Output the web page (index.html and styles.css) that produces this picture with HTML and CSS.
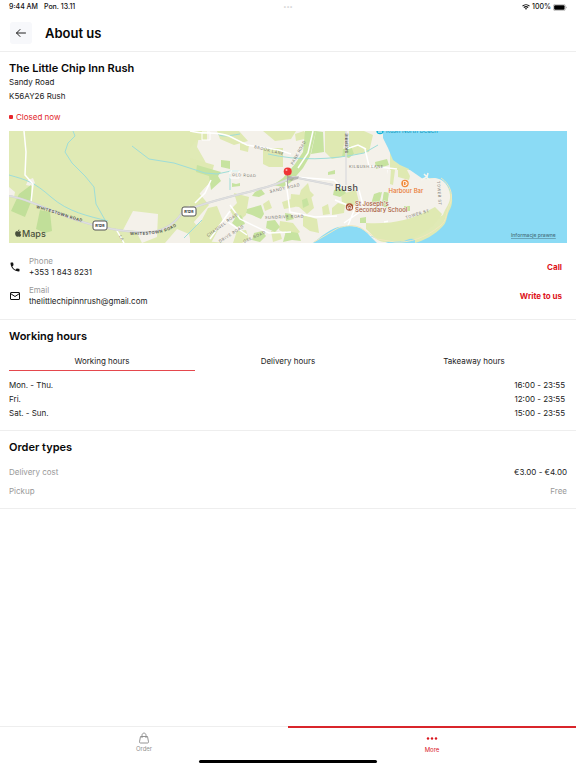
FILE: index.html
```html
<!DOCTYPE html>
<html lang="en">
<head>
<meta charset="utf-8">
<meta name="viewport" content="width=device-width, initial-scale=1">
<title>About us</title>
<link rel="stylesheet" href="styles.css">
</head>
<body>
<div class="status">
  <span>9:44 AM</span>
  <span>Pon. 13.11</span>
  <span class="status-dots">•••</span>
  <svg class="wifi" viewBox="0 0 16 12" fill="none" stroke="#111" stroke-width="2.2"><path d="M1 4.3C5 .4 11 .4 15 4.3M3.7 7.2c2.5-2.4 6.1-2.4 8.6 0"/><path d="M8 11.6 5.6 9.2c1.4-1.2 3.4-1.2 4.8 0z" fill="#111" stroke="none"/></svg>
  <span>100%</span>
  <svg class="battery" viewBox="0 0 28 14"><rect x=".7" y=".7" width="24" height="12.6" rx="3.5" fill="#fff" stroke="#999" stroke-width="1.2"/><rect x="2.3" y="2.3" width="20.8" height="9.4" rx="2" fill="#000"/><path d="M26 5v4c2-.8 2-3.200 0-4z" fill="#999"/></svg>
</div>
<header class="header">
  <button class="back" aria-label="Back"><svg viewBox="0 0 12 12" fill="none" stroke="#222" stroke-width="1" stroke-linecap="round" stroke-linejoin="round"><path d="M10.500 6h-9M5 2.500 1.500 6 5 9.500"/></svg></button>
  <h1>About us</h1>
</header>
<main>
  <section class="section place">
    <h2>The Little Chip Inn Rush</h2>
    <p>Sandy Road</p>
    <p>K56AY26 Rush</p>
    <p class="closed">Closed now</p>
    <svg class="map" viewBox="9 131 558 112" preserveAspectRatio="xMidYMid slice" role="img" aria-label="Map of Rush">
      <rect x="9" y="131" width="558" height="112" fill="#e0eab5"/>
      <!-- built-up land -->
      <path fill="#f4f1ea" d="M187 131h203v112H225l-20-2 8-17-12 7-12-15-8-7 15-6 8-10 8-12-7-20-8-14 3-16-10-4 8-5z"/>
      <path fill="#f4f1ea" d="M133 211l25 3-1 23-15 6-6-12-13-1zM9 187l6 5-1 5-5-1zM28 180l5-2 2 5-4 3-5-1zM197 195l12-12 4 10-15 13-9 4 2-8zM165 243l12-14 12 5 2 9z"/>
      <!-- fields -->
      <g fill="#dfe9b2">
        <path d="M190 131h17v9h-10l-7 8zM217 131h22l9 10-14 4-14-6zM190 158l24 7-5 18-16 18-3-2zM190 198l9-5 10 12-16 18-3-3zM208 208l9-2 6 15-12 22h-21zM234 193l15 4-3 18-9 8-7-13 7-7zM263 148h20v19h-14l-6-3zM263 131h33l-5 8-16 2zM325 131h21l-4 26-10 2-7-7zM295 134l9-3 4 7-12 3zM240 143l9 2-1 7-8-2zM349 131h15l9 4-4 17-20 3zM190 228l12-6 5 7-17 14zM237 231l9-1 3 9-7 4h-9z"/>
        <path d="M301 190l7-7 2 8 4 4-6 6-9-4zM282 202l9-3 4 8-11 2zM291 194l20 2 3 12-7 6-8-7-9-1zM322 207l6-3 2 10-7 1zM332 208l6-5 7 2-1 8-12 2zM341 194l15-4 3 12-9 6-8-5zM280 221l13 2 7 9-8 5-13-7zM303 215l14 4 2 14-9-2-7-5zM263 204l6-4 3 8-7 3zM360 137l9-3-4 16-9 5zM271 231l9 1 2 7-9 3z"/>
      </g>
      <g fill="#c7e3a0">
        <path d="M305 131h11l-6 25-7 12-12 14-8 5-10-2 10-7 12-14 8-12zM197 165l24 7-3 4 3 5-10 9-2-14-13-4zM221 160l9 1v8l-9-2z"/>
        <path d="M316 131l7 1 1 20-13 2zM255 192l6-3 4 5-6 3-7-1zM247 209l14-4 3 9-3 5-9-4-6-2zM236 217l5-2 4 9-8 3-5-4zM285 213l6 1 3 5-8 2zM267 221l8-1 5 7-5 5-9-4zM254 233l8-2 4 5-6 6-8-2zM286 231l12 2 3 8-9-1-9 2zM302 200l5-2 2 7-6 3zM334 190l9-2 3 5-6 4-7-2zM328 172l7-2v4l-7 1zM343 149l8-3 3 8-5 4-7-2zM390 173l8-2 1 5-8 1zM375 162l12-3 2 6-13 4z"/>
        <path d="M232 183l4 1 4-1v3l-8 1zM374 194l6-2-4 14-5-2zM384 192l5 1-2 15-5-2zM360 218l6-1v6h-6zM404 206h6v5h-6zM412 194l5 1v10l-5 1z"/>
      </g>
      <path fill="#c1df99" d="m19 194 12-9v17l-6 15-14-6zM40 210l10 2 2 19-7 2-9-4z"/>
      <g fill="none" stroke="#9eddd8" stroke-width="1">
        <path d="M73 131l2 5-7 7-3 9 7 11 13 13 9 11 2 17 9 16M9 175c18 5 25 7 42 22s37 19 57 24M132 146l17 13 25 4 31 10 12 1 14-3M268 154c30 7 63 6 96-1l14-8M240 134c-12 2-19 3-22 0"/>
        <path d="M230 174v16M232 171h7M184 238l18-18"/>
      </g>
      <!-- roads -->
      <g fill="none" stroke="#fff" stroke-width="1.500">
        <path d="M24 131l2 21-1 23 8 9-2 18M190 131c15 4 24 0 39 5l18 9 32 5 12 4M195 203l10-10 6-13M116 229l8 14M210 239l20-28M225 220l22 15M298 168l10-15 5-22M230 205l10 14 29 14 22-1M286 182l4 30 25 5 22-1M294 177l40 3 10 10M335 200l20 8-8 20M346 149l12-4 8 4M365 149l4 17 28 3M359 190l5 19-20 14M388 170l4 25M408 196l3 21-27 5M384 222l25-3 28-11"/>
        <path d="M202 132h8v8h-8zM230 171h9v7h-9z" stroke-width="1"/>
      </g>
      <path d="M9 196c28 4 54 25 103 33 30 5 56 8 71-18l15-5c40-13 72-17 95-29l40 8" fill="none" stroke="#cdd0d1" stroke-width="2"/>
      <path d="M9 196c28 4 54 25 103 33 30 5 56 8 71-18l15-5c40-13 72-17 95-29l40 8M346 131v54" fill="none" stroke="#dededf" stroke-width="1.500"/>
      <!-- coast and sea -->
      <path fill="#8bdbf5" d="M383 131h184v112H415c8-2 20-8 28-17 4-4 3-8 6-15 4-6 4-14 1-20-3-8-9-12-17-13l-12 1-11-4-1-6-9-4-7-5-5-12-5-10zM313 243c8-6 14-12 25-16 17-3 25 0 32 9l7 7z"/>
      <path fill="#8bdbf5" d="M370 236l18 7h27v-4z"/>
      <path fill="#f4f1ea" d="M388 170h22l13 9 12-1c9 1 14 8 15 17 1 8-5 13-7 20l-8 4-47 8z"/>
      <path fill="#dfe9b2" d="M366 223c27 1 44-2 69-16l7 7c-9 16-24 22-38 27l-20 1c-8-1-11-7-18-13z"/>
      <path fill="none" stroke="#f1e8bd" stroke-width="1" d="M441 178c9 6 13 17 9 26-5 9-2 16-10 22-15 12-31 17-45 16l-18-3-16-11c-8-4-16-2-23 0l-24 14"/>
      <path fill="#dfe9b2" d="M398 167l8 1 4 8-1 4-11-3zM391 169l4 1-2 15-3-1z"/>
      <path fill="#c7e3a0" d="M404 206h6v5h-6zM378 193l4-1-3 13-4-2zM384 192l5 1-2 12-5-2z"/>
      <path d="M421 180l6-3-3-3M427 177l1-4M427 178l3 2" fill="none" stroke="#f5f6ef" stroke-width="1.500"/>
      <!-- road names -->
      <path id="west" d="M36 208c22 6 43 14 65 19" fill="none"/>
      <path id="south" d="M130 235c18 0 40 1 58-18" fill="none"/>
      <g class="road-name main-road"><text><textPath href="#west">WHITESTOWN ROAD</textPath></text><text><textPath href="#south">WHITESTOWN ROAD</textPath></text><text transform="translate(348 153) rotate(-90)">SKERRIE</text></g>
      <g class="road-name">
        <text transform="translate(254 148) rotate(14)">BROOK LANE</text>
        <text transform="translate(293 165) rotate(-61)">PARK ROAD</text>
        <text transform="translate(232 176) rotate(3)">OLD ROAD</text>
        <text transform="translate(270 193) rotate(-13)">SANDY ROAD</text>
        <text transform="translate(265 219) rotate(-2)">SUNDRIVE ROAD</text>
        <text transform="translate(208 237) rotate(-36)">CHANNEL ROAD</text>
        <text transform="translate(220 243) rotate(-33)">DRIVE ROAD</text>
        <text transform="translate(244 243) rotate(-24)">GEE ROAD</text>
        <text x="349" y="168">KILBUSH LANE</text>
        <text transform="translate(406 219) rotate(-17)">TOWER ST</text>
        <text transform="translate(437 181) rotate(86)">TOWER ST</text>
        <text transform="translate(119 236) rotate(62)">LA</text>
      </g>
      <g fill="#fff" stroke="#555" stroke-width="1"><rect x="93" y="221" width="14" height="9" rx="2"/><rect x="182" y="207" width="14" height="9" rx="2"/></g>
      <g class="shield"><text x="100" y="227">R128</text><text x="189" y="213">R128</text></g>
      <text class="town" x="335" y="191">Rush</text>
      <circle cx="349.500" cy="207" r="3.700" fill="#a95738"/><path d="M347.500 209v-2.500l2-1.500 2 1.500v2.500h-1.300v-1.500h-1.400v1.500z" fill="none" stroke="#fff" stroke-width=".7"/>
      <g class="poi school"><text x="355" y="206">St Joseph's</text><text x="355" y="212">Secondary School</text></g>
      <circle cx="405" cy="183.500" r="3.700" fill="#f08b3c"/><path d="M403.500 181.500h2.500v4h-2.500zM406 182.500h1v2h-1" fill="none" stroke="#fff" stroke-width=".8"/>
      <text class="poi harbour" x="388.500" y="193">Harbour Bar</text>
      <circle cx="380" cy="130.500" r="3.700" fill="#16b5d9"/><path d="M378 132h4" stroke="#fff"/>
      <text class="poi beach" x="386" y="133">Rush North Beach</text>
      <path d="M288 176l5 1 6-1-1 3-6 2-4-1z" fill="#777" opacity=".4"/>
      <path d="M287.500 174v12" stroke="#aaa" stroke-width="1"/>
      <circle cx="287.700" cy="171.500" r="4" fill="#ef3535"/><circle cx="286.500" cy="170" r="1" fill="#ffb4b4"/>
      <path transform="translate(15 229.500)" fill="#48503c" d="M3.200 2c.6 0 1-.3 1.600-.3.500 0 1 .3 1.300.7-1.200.8-1 2.300.2 2.800-.4 1.200-1 2.100-1.700 2.100-.5 0-.7-.3-1.300-.3s-.8.300-1.300.3C.8 7.300-.8 3.500.9 2.100c.8-.7 1.500-.1 2.300-.1zM3 1.600C2.900.8 3.600 0 4.400-.1 4.500.7 3.800 1.600 3 1.600z"/>
      <text class="maps" x="22" y="237">Maps</text>
      <text class="legal" x="511" y="237">Informacje prawne</text>
    </svg>
    <div class="contact">
      <svg viewBox="0 0 24 24" fill="#111"><path d="M6.600 10.800c1.400 2.800 3.800 5.100 6.600 6.600l2.200-2.200c.3-.3.700-.4 1-.2 1.100.4 2.300.6 3.600.6.600 0 1 .4 1 1V20c0 .6-.4 1-1 1C10.600 21 3 13.400 3 4c0-.6.500-1 1-1h3.500c.6 0 1 .4 1 1 0 1.300.2 2.500.6 3.600.1.300 0 .7-.2 1z"/></svg>
      <div><span class="muted">Phone</span><span>+353 1 843 8231</span></div>
      <button class="action">Call</button>
    </div>
    <div class="contact">
      <svg viewBox="0 0 24 24" fill="none" stroke="#111" stroke-width="2" stroke-linejoin="round"><rect x="3" y="5" width="18" height="14" rx="1"/><path d="m3 7 9 6 9-6"/></svg>
      <div><span class="muted">Email</span><span>thelittlechipinnrush@gmail.com</span></div>
      <button class="action">Write to us</button>
    </div>
  </section>
  <section class="section hours">
    <h2>Working hours</h2>
    <div class="tabs" role="tablist">
      <button role="tab" aria-selected="true">Working hours</button>
      <button role="tab" aria-selected="false">Delivery hours</button>
      <button role="tab" aria-selected="false">Takeaway hours</button>
    </div>
    <table>
      <tr><th scope="row">Mon. - Thu.</th><td>16:00 - 23:55</td></tr>
      <tr><th scope="row">Fri.</th><td>12:00 - 23:55</td></tr>
      <tr><th scope="row">Sat. - Sun.</th><td>15:00 - 23:55</td></tr>
    </table>
  </section>
  <section class="section types">
    <h2>Order types</h2>
    <dl>
      <div><dt>Delivery cost</dt><dd>€3.00 - €4.00</dd></div>
      <div><dt>Pickup</dt><dd class="muted">Free</dd></div>
    </dl>
  </section>
</main>
<nav class="nav">
  <a href="#order"><svg viewBox="0 0 12 12" fill="none" stroke="#888" stroke-width=".9" stroke-linejoin="round"><path d="M2.500 4.500h7l1 5.300c.1.700-.3 1.200-1 1.200h-7c-.7 0-1.100-.5-1-1.200zM4 6V3.400C4 .300 8 .300 8 3.400V6"/></svg>Order</a>
  <a class="current" href="#more" aria-current="page"><svg viewBox="0 0 12 12" fill="#d9161d"><circle cx="2" cy="5.500" r="1.200"/><circle cx="6" cy="5.500" r="1.200"/><circle cx="10" cy="5.500" r="1.200"/></svg>More</a>
</nav>
<div class="home"></div>
</body>
</html>
```
FILE: styles.css
```css
* { box-sizing: border-box; }
body {
  margin: 0;
  min-height: 100vh;
  display: flex;
  flex-direction: column;
  background: #fff;
  color: #222;
  font: 8px/12px Inter, "Liberation Sans", sans-serif;
}
h1, h2, p, dl, dd { margin: 0; }
h1, h2 { color: #080808; font-weight: 600; }
h1 { font-size: 13px; line-height: 20px; }
h2 { font-size: 11px; line-height: 14px; }
button { font: inherit; color: inherit; border: 0; padding: 0; background: none; cursor: pointer; }
svg { display: block; flex: none; }
.muted { color: #999; }

.status {
  display: flex;
  align-items: center;
  gap: 6px;
  height: 14px;
  padding: 0 9px;
  color: #111;
  font-size: 7px;
  font-weight: 500;
  position: relative;
}
.status-dots {
  position: absolute;
  left: 50%;
  transform: translateX(-50%);
  color: #d4d4d4;
  font-size: 6px;
}
.wifi { width: 8px; height: 6px; margin-left: auto; }
.wifi + span { margin: 0 -4px; }
.battery { width: 14px; height: 7px; }

.header {
  display: flex;
  align-items: center;
  gap: 13px;
  height: 38px;
  padding: 0 10px;
  border-bottom: 1px solid #eee;
}
.back {
  display: grid;
  place-items: center;
  width: 22px;
  height: 22px;
  border-radius: 3px;
  background: #f7f8fb;
}
.back svg { width: 12px; height: 12px; }

main { flex: 1; }
.section { padding: 9px; border-bottom: 1px solid #eee; }
.place { padding-bottom: 12px; }
.place p { line-height: 14px; }
.place .closed {
  display: flex;
  align-items: center;
  gap: 3px;
  margin: 7px 0;
  color: #e2262b;
}
.closed::before {
  content: "";
  width: 4px;
  height: 4px;
  border-radius: 1px;
  background: #e8262b;
}
.map { width: 100%; height: 112px; }
.contact {
  display: flex;
  align-items: center;
  gap: 8px;
  margin-top: 7px;
}
.map + .contact { margin-top: 13px; }
.contact svg { width: 12px; height: 12px; }
.contact div { display: grid; line-height: 11px; }
.contact .action {
  margin-left: auto;
  padding-right: 5px;
  color: #dd131a;
  font-weight: 700;
}
.road-name { fill: #77756f; font-size: 4px; letter-spacing: 0.5px; }
.main-road { fill: #4c4f4a; font-weight: 600; }
.shield { fill: #333; font-size: 4px; font-weight: 700; text-anchor: middle; }
.town { fill: #444; font-size: 9px; font-weight: 500; letter-spacing: 0.5px; }
.poi { font-size: 6px; font-weight: 500; paint-order: stroke; stroke: #f4f1ea; stroke-width: 1px; }
.school { fill: #a85b40; }
.harbour { fill: #e97832; }
.beach { fill: #159fc4; stroke: none; }
.maps { fill: #48503c; font-size: 9px; font-weight: 500; }
.legal { fill: #456e7c; font-size: 5px; font-weight: 500; text-decoration: underline; }

.tabs { display: grid; grid-template-columns: repeat(3, 1fr); margin-top: 9px; }
.tabs button { height: 19px; border-bottom: 1px solid transparent; }
.tabs button[aria-selected="true"] { border-bottom-color: #e5484d; }
table { width: 100%; margin: 7px 0 1px; border-collapse: collapse; }
th, td { height: 14px; padding: 0; font-weight: 400; text-align: left; }
td { padding-right: 2px; text-align: right; }

dl { display: grid; gap: 7px; margin-top: 12px; padding-bottom: 2px; }
dl div { display: flex; justify-content: space-between; }
dt { color: #999; }

.nav { display: grid; grid-template-columns: 1fr 1fr; height: 33px; }
.nav a {
  display: flex;
  flex-direction: column;
  align-items: center;
  border-top: 1px solid #eee;
  padding-top: 5px;
  color: #929292;
  font-size: 6px;
  line-height: 10px;
  text-decoration: none;
}
.nav .current { border-top: 2px solid #d9252b; color: #d9161d; }
.nav svg { width: 12px; height: 12px; }
.home {
  align-self: center;
  width: 31%;
  height: 3px;
  margin: 1px 0 5px;
  border-radius: 2px;
  background: #000;
}
```
